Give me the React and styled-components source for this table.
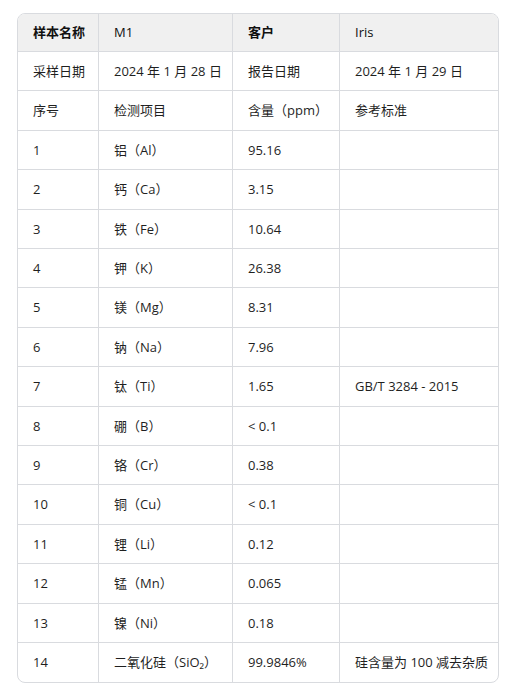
import React from 'react'
import styled, { createGlobalStyle } from 'styled-components'

const GlobalStyle = createGlobalStyle`
    body {
        margin: 0;
        background: #ffffff;
        font-family: "Open Sans", "Noto Sans CJK SC", sans-serif;
    }
`;

const Page = styled.div`
    padding: 13px 21px 12px 17px;
`;

const TableWrap = styled.div`
    border: 1px solid #d9dbdf;
    border-radius: 8px;
    overflow: hidden;
`;

const Table = styled.table`
    width: 100%;
    table-layout: fixed;
    border-collapse: separate;
    border-spacing: 0;
    font-size: 13px;
    color: #1f1f1f;
`;

const Col = styled.col`
    width: ${(p) => p.w}px;
`;

const Cell = styled.td`
    padding: 10px 15px;
    line-height: 18.4px;
    text-align: left;
    border-right: 1px solid #d9dbdf;
    border-bottom: 1px solid #d9dbdf;
    white-space: nowrap;
    overflow: hidden;
    &:last-child {
        border-right: none;
    }
    tbody tr:last-child > & {
        border-bottom: none;
    }
`;

const HeadCell = styled(Cell).attrs({ as: 'th' })`
    background: #f0f0f0;
    font-weight: ${(p) => (p.$plain ? 400 : 700)};
    color: #111;
    line-height: 17px;
`;

const headRow = [
    { text: '样本名称' },
    { text: 'M1', plain: true },
    { text: '客户' },
    { text: 'Iris', plain: true },
];

const rows = [
    ['采样日期', '2024 年 1 月 28 日', '报告日期', '2024 年 1 月 29 日'],
    ['序号', '检测项目', '含量（ppm）', '参考标准'],
    ['1', '铝（Al）', '95.16', ''],
    ['2', '钙（Ca）', '3.15', ''],
    ['3', '铁（Fe）', '10.64', ''],
    ['4', '钾（K）', '26.38', ''],
    ['5', '镁（Mg）', '8.31', ''],
    ['6', '钠（Na）', '7.96', ''],
    ['7', '钛（Ti）', '1.65', 'GB/T 3284 - 2015'],
    ['8', '硼（B）', '< 0.1', ''],
    ['9', '铬（Cr）', '0.38', ''],
    ['10', '铜（Cu）', '< 0.1', ''],
    ['11', '锂（Li）', '0.12', ''],
    ['12', '锰（Mn）', '0.065', ''],
    ['13', '镍（Ni）', '0.18', ''],
    ['14', '二氧化硅（SiO₂）', '99.9846%', '硅含量为 100 减去杂质'],
];

function App() {
    return (
        <Page>
            <GlobalStyle />
            <TableWrap>
                <Table>
                    <colgroup>
                        <Col w={81} />
                        <Col w={134} />
                        <Col w={107} />
                        <Col w={160} />
                    </colgroup>
                    <thead>
                        <tr>
                            {headRow.map((h) => (
                                <HeadCell key={h.text} $plain={h.plain}>{h.text}</HeadCell>
                            ))}
                        </tr>
                    </thead>
                    <tbody>
                        {rows.map((r, i) => (
                            <tr key={i}>
                                {r.map((c, j) => <Cell key={j}>{c}</Cell>)}
                            </tr>
                        ))}
                    </tbody>
                </Table>
            </TableWrap>
        </Page>
    )
}

export default App
